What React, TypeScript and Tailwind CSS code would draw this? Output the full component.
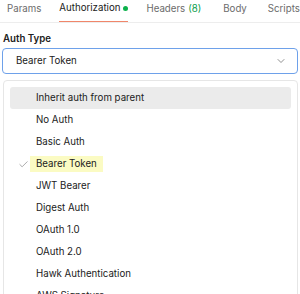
import { ChevronDown, Check } from 'lucide-react'

const TABS = [
  { label: 'Params', extra: '' },
  { label: 'Authorization', extra: '' },
  { label: 'Headers', extra: 'mr-[4px]' },
  { label: 'Body', extra: 'mr-[3px]' },
  { label: 'Scripts', extra: '' },
]

const AUTH_TYPES = [
  'Inherit auth from parent',
  'No Auth',
  'Basic Auth',
  'Bearer Token',
  'JWT Bearer',
  'Digest Auth',
  'OAuth 1.0',
  'OAuth 2.0',
  'Hawk Authentication',
  'AWS Signature',
]

export default function App() {
  const selected = 'Bearer Token'

  return (
    <div className="h-[294px] w-[300px] overflow-hidden bg-white font-['Inter',sans-serif] text-[9.7px] leading-[12px] text-[#212121]">
      <div className="flex h-[23px] items-start gap-[18px] border-b border-[#ededed] pl-[7px]">
        {TABS.map(({ label, extra }) => (
          <div
            key={label}
            className={`flex h-[22px] items-center whitespace-nowrap pb-[5px] ${extra} ${
              label === 'Authorization'
                ? 'border-b-[1.5px] border-[#f0866a] text-[#212121]'
                : 'text-[#6b6b6b]'
            }`}
          >
            {label}
            {label === 'Authorization' && (
              <span className="ml-[3px] h-[5px] w-[5px] rounded-full bg-[#0cb14b]" />
            )}
            {label === 'Headers' && <span className="ml-[3px] text-[#0a9c4a]">(8)</span>}
          </div>
        ))}
      </div>

      <div className="px-[2px]">
        <div className="mt-[10px] pl-[1px] font-semibold">Auth Type</div>
        <div className="mt-[3px] flex h-[26px] items-center justify-between rounded-[4px] border-[1.5px] border-[#6ea1ea] pl-[13px] pr-[10px]">
          <span>{selected}</span>
          <ChevronDown size={12} strokeWidth={1.5} className="text-[#6b6b6b]" />
        </div>

        <div className="mt-[6px] ml-[1px] rounded-[4px] border border-[#e6e6e6] px-[6px] pt-[6px]">
          {AUTH_TYPES.map((type, i) => (
            <div
              key={type}
              className={`flex h-[22px] items-center rounded-[3px] ${i === 0 ? 'bg-[#ebebeb]' : ''}`}
            >
              <span className="flex w-[20px] justify-end pr-[1px]">
                {type === selected && (
                  <Check size={11} strokeWidth={1.25} className="text-[#6b6b6b]" />
                )}
              </span>
              <span
                className={`flex h-[16px] items-center px-[6px] ${type === selected ? 'bg-[#fbfbc3]' : ''}`}
              >
                {type}
              </span>
            </div>
          ))}
        </div>
      </div>
    </div>
  )
}
